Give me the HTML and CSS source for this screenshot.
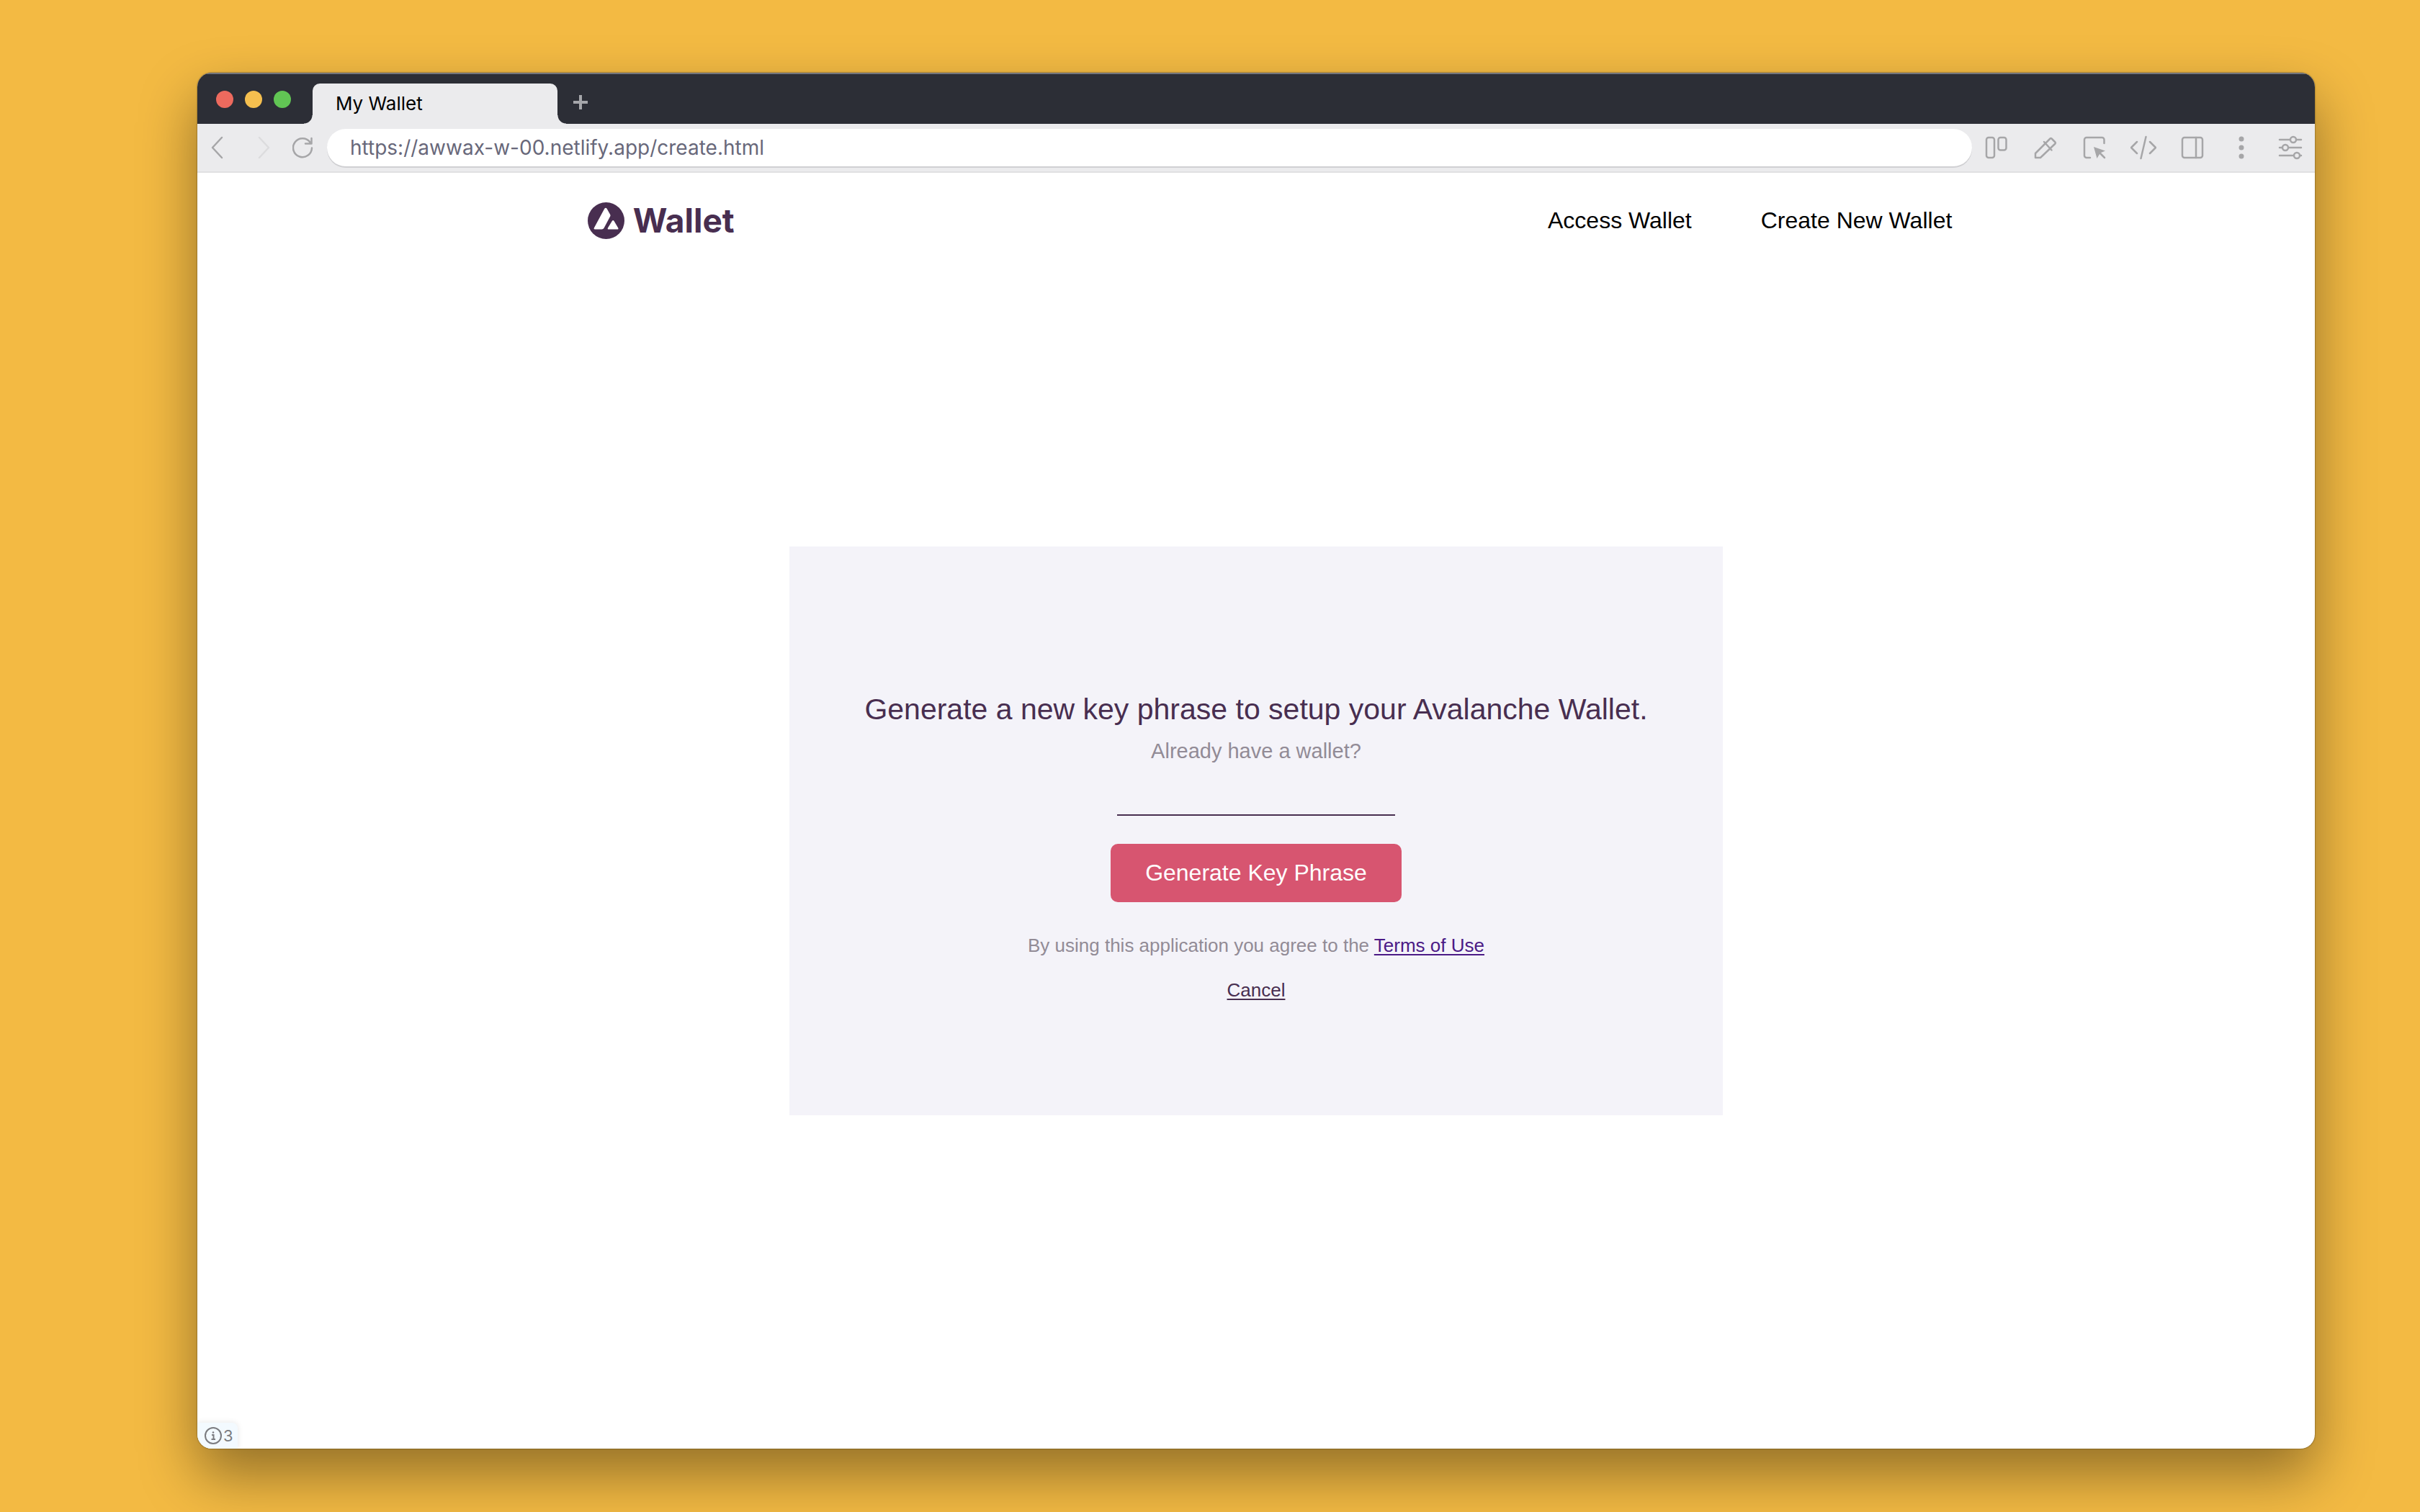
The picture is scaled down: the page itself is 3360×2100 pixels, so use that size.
FILE: index.html
```html
<!DOCTYPE html>
<html lang="en">
<head>
<meta charset="utf-8">
<title>My Wallet</title>
<link rel="stylesheet" href="styles.css">
</head>
<body>
<div class="window">
  <div class="titlebar">
    <div class="lights">
      <button class="light light-close" aria-label="Close"></button>
      <button class="light light-minimize" aria-label="Minimize"></button>
      <button class="light light-zoom" aria-label="Zoom"></button>
    </div>
    <div class="tab">My Wallet</div>
    <button class="new-tab" aria-label="New tab">
      <svg width="20" height="20" viewBox="0 0 20 20" fill="none" stroke="#a5a6aa" stroke-width="4"><path d="M10 0v20M0 10h20"/></svg>
    </button>
  </div>

  <div class="toolbar">
    <div class="history">
      <button class="tool" aria-label="Back"><svg width="32" height="32" viewBox="0 0 32 32"><path d="M22 2 9 16l13 14"/></svg></button>
      <button class="tool tool-off" aria-label="Forward"><svg width="32" height="32" viewBox="0 0 32 32"><path d="m14 2 13 14-13 14"/></svg></button>
      <button class="tool" aria-label="Reload"><svg width="32" height="32" viewBox="0 0 32 32"><path d="M27 16.500A13 13 0 1 1 24.500 8.500M26.500 3v7.500H18"/></svg></button>
    </div>
    <input class="address" type="text" aria-label="Address" value="https://awwax-w-00.netlify.app/create.html">
    <div class="actions">
      <button class="tool" aria-label="Boards"><svg width="36" height="36" viewBox="0 0 36 36"><rect x="4" y="4" width="11" height="28" rx="3"/><rect x="20.500" y="4" width="11" height="17.500" rx="3"/></svg></button>
      <button class="tool" aria-label="Draw"><svg width="36" height="36" viewBox="0 0 36 36"><path d="M4 32v-6L24.500 5.500a1.500 1.500 0 0 1 2 0l5 5a1.500 1.500 0 0 1 0 2L11 32ZM16 10l10.500 11.500"/></svg></button>
      <button class="tool" aria-label="Select element"><svg width="36" height="36" viewBox="0 0 36 36"><path d="M12 32H7a3 3 0 0 1-3-3V7a3 3 0 0 1 3-3h21.500a3 3 0 0 1 3 3v5M24 24l8 8"/><path class="solid" d="m17 17 16 5.500-7 3-4.500 7.500Z"/></svg></button>
      <button class="tool" aria-label="View code"><svg width="36" height="36" viewBox="0 0 36 36"><path d="m9 10-8 8 8 8M27 10l8 8-8 8M21.500 3l-7 30"/></svg></button>
      <button class="tool" aria-label="Sidebar"><svg width="36" height="36" viewBox="0 0 36 36"><rect x="4" y="4" width="28" height="28" rx="3"/><path d="M23 4v28"/></svg></button>
      <button class="tool" aria-label="More"><svg width="36" height="36" viewBox="0 0 36 36"><g class="solid"><circle cx="18" cy="6" r="3.500"/><circle cx="18" cy="18" r="3.500"/><circle cx="18" cy="30" r="3.500"/></g></svg></button>
      <button class="tool" aria-label="Settings"><svg width="36" height="36" viewBox="0 0 36 36"><path d="M3 7h30M3 18h30M3 29h30"/><circle cx="22" cy="7" r="4"/><circle cx="11" cy="18" r="4"/><circle cx="27" cy="29" r="4"/></svg></button>
    </div>
  </div>

  <div class="page">
    <header class="header">
      <a class="logo" href="#">
        <svg width="51" height="51" viewBox="0 0 51 51"><circle cx="25.500" cy="25.500" r="25.500" fill="#482e50"/><path fill="#fff" d="M23.300 8.800q1.700-2.200 3.300 0l4.600 8.200q.7 1.300 0 2.600L22.700 35.500q-1 2-3.200 2H10q-2.200 0-1-2.200ZM33.800 26q1.400-2 2.800 0l5.600 9.500q1 2-1 2H29q-2 0-1-2Z"/></svg>
        <span class="logo-text">Wallet</span>
      </a>
      <nav class="nav">
        <a href="#">Access Wallet</a>
        <a href="#">Create New Wallet</a>
      </nav>
    </header>

    <main class="main">
      <section class="card">
        <h1 class="card-title">Generate a new key phrase to setup your Avalanche Wallet.</h1>
        <p class="card-hint">Already have a wallet?</p>
        <input class="phrase" type="text" aria-label="Key phrase">
        <button class="generate">Generate Key Phrase</button>
        <p class="terms">By using this application you agree to the <a class="terms-link" href="#">Terms of Use</a></p>
        <a class="cancel" href="#">Cancel</a>
      </section>
    </main>

    <button class="badge" aria-label="3 notices">
      <svg width="24" height="24" viewBox="0 0 24 24" fill="none" stroke="#7b7c80" stroke-width="2"><circle cx="12" cy="12" r="11"/><path d="M10 11h2.500v6M9.500 17h5.500"/><circle cx="12" cy="7.500" r="1.300" fill="#7b7c80" stroke="none"/></svg>
      <span>3</span>
    </button>
  </div>
</div>
</body>
</html>
```
FILE: styles.css
```css
* {
  box-sizing: border-box;
}

body {
  margin: 0;
  min-height: 100vh;
  display: flex;
  padding: 101px 146px 88px 274px;
  background: #f3ba43;
  font-family: "Liberation Sans", Arial, sans-serif;
  color: #000;
}

button {
  margin: 0;
  padding: 0;
  border: 0;
  background: none;
  font-family: inherit;
}

.window {
  flex: 1;
  display: flex;
  flex-direction: column;
  overflow: hidden;
  border-radius: 20px;
  background: #fff;
  box-shadow: 0 0 2px rgba(0, 0, 0, 0.6), 0 36px 80px rgba(0, 0, 0, 0.4);
}

/* Browser chrome */

.titlebar {
  display: flex;
  align-items: flex-end;
  height: 71px;
  background: #2c2e36;
  box-shadow: inset 0 2px 0 #74767c;
}

.lights {
  display: flex;
  align-self: center;
  gap: 16px;
  width: 160px;
  padding: 2px 0 0 26px;
}

.light {
  width: 24px;
  height: 24px;
  border-radius: 50%;
}

.light-close {
  background: #ed6a5e;
}

.light-minimize {
  background: #f5bf4f;
}

.light-zoom {
  background: #61c554;
}

.tab {
  position: relative;
  width: 340px;
  height: 56px;
  padding: 0 32px;
  border-radius: 10px 10px 0 0;
  background: #ebebed;
  font: 400 26px/56px Inter, sans-serif;
}

.tab::before,
.tab::after {
  content: "";
  position: absolute;
  bottom: 0;
  width: 12px;
  height: 12px;
}

.tab::before {
  right: 100%;
  background: radial-gradient(circle at 0 0, transparent 11px, #ebebed 12px);
}

.tab::after {
  left: 100%;
  background: radial-gradient(circle at 100% 0, transparent 11px, #ebebed 12px);
}

.new-tab {
  display: flex;
  align-items: center;
  justify-content: center;
  width: 64px;
  height: 60px;
}

.toolbar {
  display: flex;
  align-items: center;
  height: 68px;
  border-bottom: 2px solid #e0e0e2;
  background: #ebebed;
}

.history {
  display: flex;
  width: 180px;
  gap: 28px;
  padding-left: 12px;
}

.tool {
  display: flex;
  align-items: center;
  justify-content: center;
}

.tool svg {
  fill: none;
  stroke: #a6a6a8;
  stroke-width: 2.5;
  stroke-linecap: round;
  stroke-linejoin: round;
}

.tool circle {
  fill: #ebebed;
}

.tool .solid,
.tool .solid circle {
  fill: #a6a6a8;
  stroke: none;
}

.tool-off svg {
  stroke: #dcdcde;
}

.address {
  flex: 1;
  min-width: 0;
  height: 52px;
  padding: 0 32px;
  border: 0;
  border-radius: 26px;
  background: #fff;
  box-shadow: 0 2px 0 #d0d0d3;
  color: #68687a;
  font: 400 28px/52px Inter, sans-serif;
}

.actions {
  display: flex;
}

.actions .tool {
  width: 68px;
}

/* Wallet page */

.page {
  position: relative;
  flex: 1;
  display: flex;
  flex-direction: column;
}

.header {
  display: flex;
  align-items: center;
  justify-content: space-around;
  height: 132px;
}

.logo {
  display: flex;
  align-items: center;
  gap: 12px;
  padding-left: 38px;
  color: #482e50;
  text-decoration: none;
}

.logo-text {
  font: 700 46px/56px Inter, sans-serif;
}

.nav {
  display: flex;
  gap: 96px;
  padding-left: 122px;
}

.nav a {
  color: #000;
  font-size: 32px;
  line-height: 40px;
  text-decoration: none;
}

.main {
  flex: 1;
  display: flex;
  flex-direction: column;
  align-items: center;
  justify-content: center;
  padding-bottom: 76px;
}

.card {
  display: flex;
  flex-direction: column;
  align-items: center;
  padding: 200px 104px 158px;
  background: #f4f3f9;
}

.card-title {
  margin: 0;
  color: #482e50;
  font-size: 41px;
  font-weight: 400;
  line-height: 52px;
}

.card-hint {
  margin: 12px 0 0;
  color: #928b96;
  font-size: 29px;
  line-height: 40px;
}

.phrase {
  width: 386px;
  height: 50px;
  margin: 20px 0 39px;
  border: 0;
  border-bottom: 2px solid #482e50;
  background: transparent;
  font-size: 28px;
}

.generate {
  height: 81px;
  padding: 0 48px;
  border-radius: 10px;
  background: #d75570;
  color: #fff;
  font-size: 32px;
}

.terms {
  margin: 44px 0 0;
  color: #928b96;
  font-size: 26px;
  line-height: 32px;
}

.terms-link,
.cancel {
  color: #482e50;
  text-decoration-thickness: 2px;
  text-underline-offset: 3px;
}

.terms-link {
  color: #4b1a86;
}

.cancel {
  margin-top: 30px;
  font-size: 26px;
  line-height: 32px;
}

.badge {
  position: absolute;
  left: 0;
  bottom: 0;
  display: flex;
  align-items: center;
  gap: 2px;
  height: 36px;
  padding: 0 6px 0 10px;
  border-radius: 0 8px 0 0;
  background: #f3faff;
  box-shadow: 0 0 8px rgba(0, 0, 0, 0.1);
  color: #7b7c80;
  font: 400 22px/36px Inter, sans-serif;
}
```
